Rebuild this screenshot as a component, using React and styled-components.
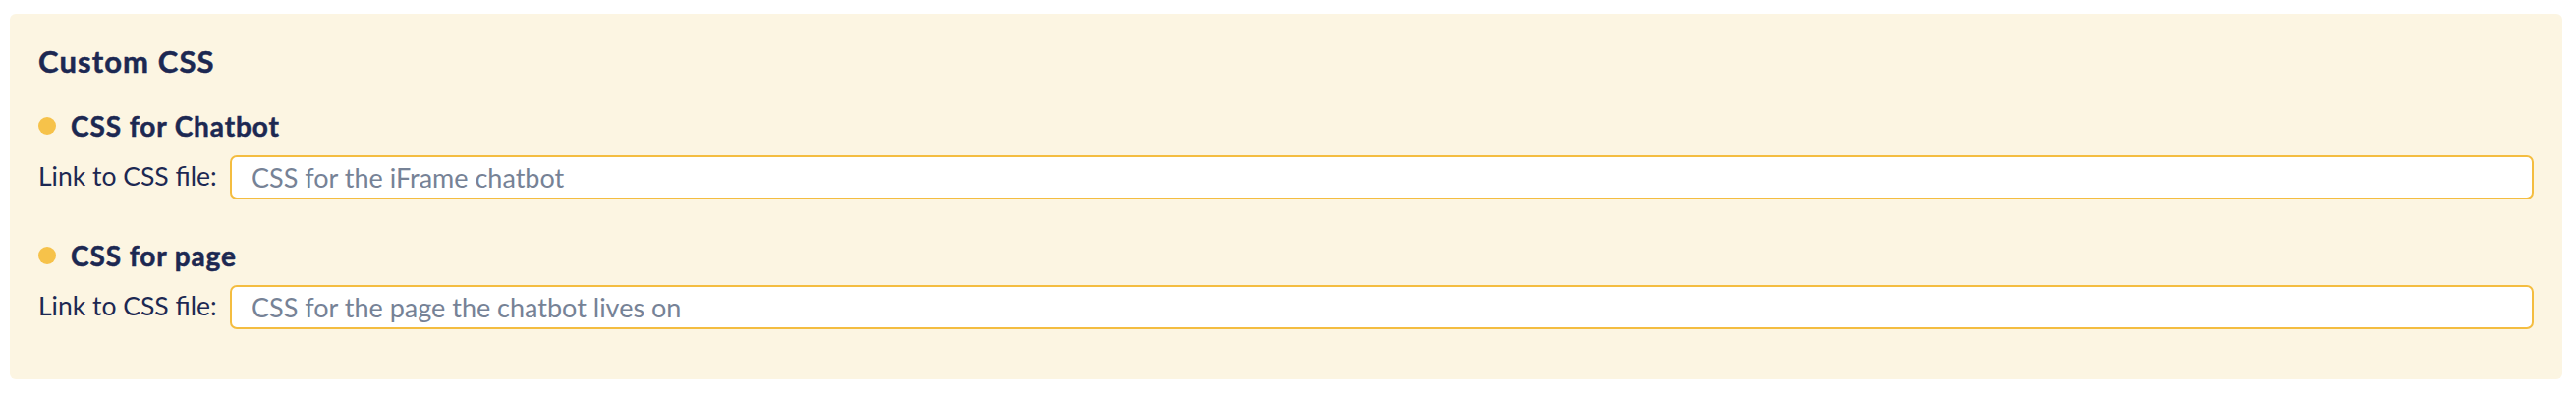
import React from "react";
import styled, { createGlobalStyle } from "styled-components";

const Global = createGlobalStyle`
  html, body { margin: 0; padding: 0; background: #ffffff; }
  body { font-family: Lato, "Noto Sans", sans-serif; }
  * { box-sizing: border-box; }
`;

const Page = styled.div`
  padding: 14px 14px 20px 10px;
`;

const Panel = styled.section`
  background: #fcf5e2;
  border-radius: 6px;
  padding: 28px 29px 51px 29px;
  display: flex;
  flex-direction: column;
`;

const Title = styled.h3`
  margin: 0 0 28px 0;
  font-family: Lato, sans-serif;
  font-weight: 700;
  font-size: 31px;
  line-height: 40px;
  letter-spacing: 1.1px;
  color: #1c2852;
  -webkit-text-stroke: 0.5px #1c2852;
`;

const Section = styled.div`
  display: flex;
  flex-direction: column;
  gap: 12px;
  & + & {
    margin-top: 39px;
  }
`;

const SectionHead = styled.div`
  display: flex;
  align-items: center;
  gap: 15px;
  height: 36px;
`;

const Dot = styled.span`
  width: 18px;
  height: 18px;
  border-radius: 50%;
  background: #f6c24a;
  flex: 0 0 auto;
`;

const SectionTitle = styled.h4`
  margin: 0;
  font-family: Lato, sans-serif;
  font-weight: 700;
  font-size: 28px;
  line-height: 36px;
  letter-spacing: 0.9px;
  color: #1c2852;
  -webkit-text-stroke: 0.5px #1c2852;
`;

const FieldRow = styled.label`
  display: flex;
  align-items: center;
`;

const FieldLabel = styled.span`
  flex: 0 0 195px;
  font-family: Lato, sans-serif;
  font-size: 26.5px;
  line-height: 34px;
  letter-spacing: 0;
  color: #1c2852;
  padding-bottom: 3px;
`;

const TextInput = styled.input`
  flex: 1 1 auto;
  height: 45px;
  border: 2px solid #f4bd40;
  border-radius: 7px;
  background: #ffffff;
  padding: 0 20px;
  font-family: Lato, sans-serif;
  font-size: 27px;
  letter-spacing: 0;
  color: #1c2852;
  outline: none;
  &::placeholder {
    color: #768296;
    opacity: 1;
  }
`;

const sections = [
  { title: "CSS for Chatbot", placeholder: "CSS for the iFrame chatbot" },
  { title: "CSS for page", placeholder: "CSS for the page the chatbot lives on" },
];

export default function App() {
  return (
    <>
      <Global />
      <Page>
        <Panel>
          <Title>Custom CSS</Title>
          {sections.map((s) => (
            <Section key={s.title}>
              <SectionHead>
                <Dot />
                <SectionTitle>{s.title}</SectionTitle>
              </SectionHead>
              <FieldRow>
                <FieldLabel>Link to CSS file:</FieldLabel>
                <TextInput type="text" placeholder={s.placeholder} />
              </FieldRow>
            </Section>
          ))}
        </Panel>
      </Page>
    </>
  );
}
